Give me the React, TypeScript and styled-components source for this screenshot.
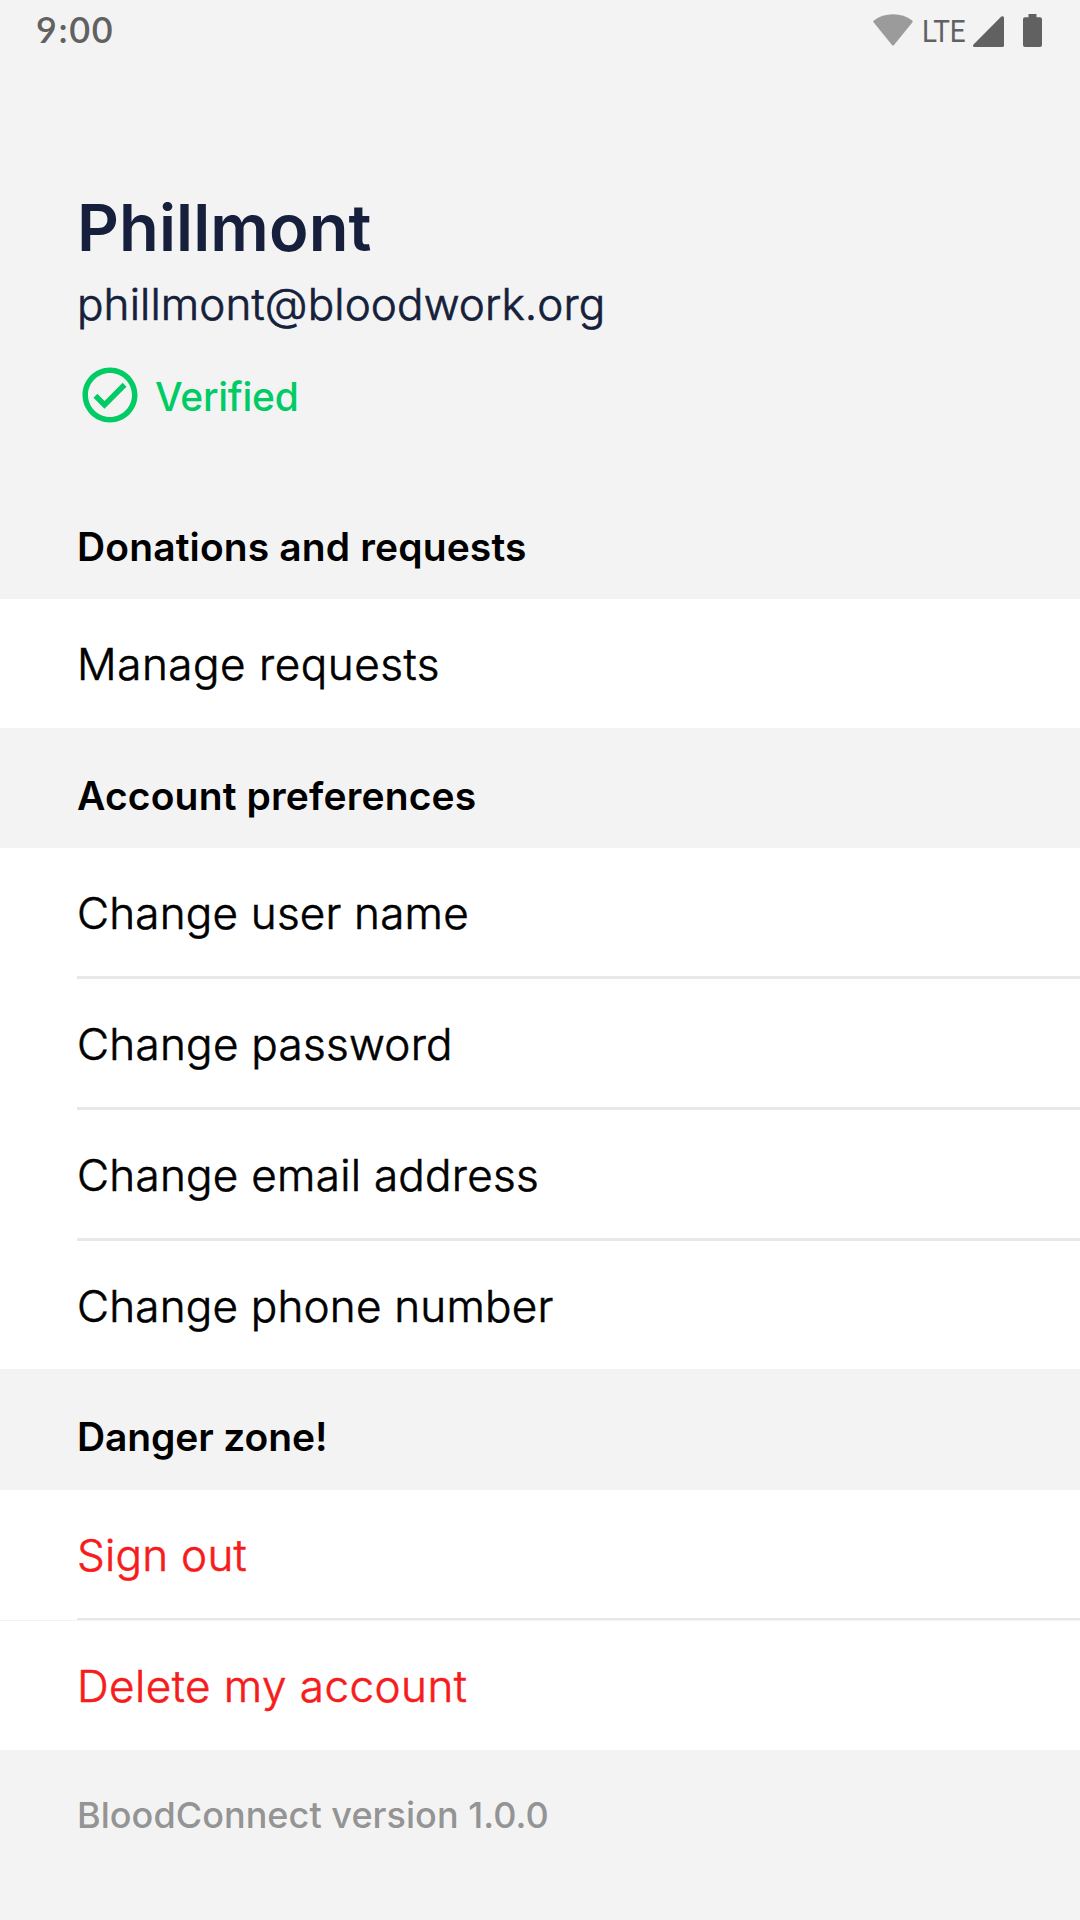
import React from "react";
import styled, { createGlobalStyle } from "styled-components";

const GlobalStyle = createGlobalStyle`
  *, *::before, *::after { box-sizing: border-box; }
  body { margin: 0; background: #f3f3f3; font-family: Inter, "Liberation Sans", sans-serif; }
`;

const Screen = styled.main`
  display: flex;
  flex-direction: column;
  width: 1080px;
  height: 1920px;
  overflow: hidden;
  background: #f3f3f3;
`;

const StatusBar = styled.header`
  display: flex;
  justify-content: space-between;
  align-items: flex-start;
  height: 62px;
  padding: 0 38px 0 36px;
  color: #616161;
`;

const Clock = styled.span`
  padding-top: 8px;
  font: 600 36px/42px Lato, sans-serif;
  letter-spacing: 1.6px;
`;

const StatusIcons = styled.div`
  display: flex;
  align-items: flex-start;
  padding-top: 14px;
`;

const Network = styled.span`
  width: 43px;
  margin: -3px 8px 0 9px;
  font: 400 32px/40px Roboto, sans-serif;
  white-space: nowrap;
  transform: scaleX(0.87);
  transform-origin: 0 50%;
`;

const Signal = styled.svg`
  margin: 2px 19px 0 0;
`;

const Profile = styled.section`
  display: flex;
  flex-direction: column;
  align-items: flex-start;
  height: 428px;
  padding: 126px 77px 0;
  color: #161f3b;
`;

const Name = styled.h1`
  margin: 0;
  font-size: 65px;
  line-height: 80px;
  font-weight: 600;
  letter-spacing: 0.12px;
`;

const Email = styled.p`
  margin: 9px 0 0;
  font-size: 44px;
  line-height: 54px;
  font-weight: 300;
  letter-spacing: 0.12px;
  -webkit-text-stroke: 0.7px currentColor;
`;

const Verified = styled.div`
  display: flex;
  align-items: center;
  gap: 12px;
  margin-top: 31px;
  color: #00cb65;
`;

const VerifiedLabel = styled.span`
  padding-top: 3px;
  font-size: 39px;
  line-height: 48px;
  font-weight: 500;
  letter-spacing: -0.25px;
`;

const SectionTitle = styled.h2<{ $height: number; $tracking: number; $bottom: number }>`
  display: flex;
  align-items: flex-end;
  height: ${({ $height }) => $height}px;
  margin: 0;
  padding: 0 77px ${({ $bottom }) => $bottom}px;
  font-size: 39px;
  line-height: 48px;
  font-weight: 600;
  letter-spacing: ${({ $tracking }) => $tracking}px;
  color: #000;
`;

const Menu = styled.ul`
  margin: 0;
  padding: 0;
  list-style: none;
  background: #fff;
`;

const MenuItem = styled.li<{ $danger: boolean; $tracking: number; $tall?: boolean }>`
  display: flex;
  align-items: center;
  height: ${({ $tall }) => ($tall ? 129 : 128)}px;
  padding: ${({ $tall }) => ($tall ? 0 : 2)}px 0 0 77px;
  font-size: 44px;
  font-weight: 300;
  letter-spacing: ${({ $tracking }) => $tracking}px;
  -webkit-text-stroke: 0.6px currentColor;
  color: ${({ $danger }) => ($danger ? "#f61c1c" : "#000")};
`;

const Divider = styled.li<{ $seam: boolean }>`
  height: 3px;
  padding-left: 77px;
  border-bottom: ${({ $seam }) => ($seam ? "1px solid #f3f3f3" : "none")};
  &::before {
    content: "";
    display: block;
    height: 100%;
    background: #e8e8e8;
  }
`;

const Version = styled.footer`
  padding: 43px 77px 0;
  font-size: 36px;
  line-height: 44px;
  font-weight: 500;
  letter-spacing: 0.05px;
  color: #949494;
`;

interface Item {
  label: string;
  tracking: number;
  tall?: boolean;
}

interface Section {
  title: string;
  height: number;
  bottom: number;
  tracking: number;
  danger: boolean;
  items: Item[];
}

const sections: Section[] = [
  {
    title: "Donations and requests",
    height: 109,
    bottom: 28,
    tracking: 0.13,
    danger: false,
    items: [{ label: "Manage requests", tracking: 0.55, tall: true }],
  },
  {
    title: "Account preferences",
    height: 120,
    bottom: 28,
    tracking: 0.16,
    danger: false,
    items: [
      { label: "Change user name", tracking: 0.2 },
      { label: "Change password", tracking: 0.28 },
      { label: "Change email address", tracking: 0.27 },
      { label: "Change phone number", tracking: 0.2 },
    ],
  },
  {
    title: "Danger zone!",
    height: 121,
    bottom: 29,
    tracking: -0.12,
    danger: true,
    items: [
      { label: "Sign out", tracking: 0.25 },
      { label: "Delete my account", tracking: 0.47, tall: true },
    ],
  },
];

export default function App() {
  return (
    <Screen>
      <GlobalStyle />
      <StatusBar>
        <Clock>9:00</Clock>
        <StatusIcons>
          <svg width="40" height="32" viewBox="0 0 40 32">
            <path d="M.8 6.6Q9 .3 20 .3T39.2 6.6Q40.1 7.5 39.3 8.6L21 31Q20 32 19 31L.7 8.6Q-.1 7.5.8 6.6Z" fill="#9b9b9b" />
          </svg>
          <Network>LTE</Network>
          <Signal width="31" height="31" viewBox="0 0 31 31">
            <path d="M28.3.6Q31-.8 31 2V29.5Q31 31 29.5 31H1.5Q-.8 31 .5 28.6Z" fill="#616161" />
          </Signal>
          <svg width="19" height="33" viewBox="0 0 19 33">
            <path d="M5.5 3.3V0H13.5V3.3H17Q19 3.3 19 5.3V31Q19 33 17 33H2Q0 33 0 31V5.3Q0 3.3 2 3.3Z" fill="#616161" />
          </svg>
        </StatusIcons>
      </StatusBar>
      <Profile>
        <Name>Phillmont</Name>
        <Email>phillmont@bloodwork.org</Email>
        <Verified>
          <svg width="66" height="66" viewBox="0 0 24 24" fill="currentColor">
            <path d="M12 2C6.48 2 2 6.48 2 12s4.48 10 10 10 10-4.48 10-10S17.52 2 12 2zm0 18c-4.41 0-8-3.59-8-8s3.59-8 8-8 8 3.59 8 8-3.59 8-8 8zm4.59-12.42L10 14.17l-2.59-2.58L6 13l4 4 8-8z" />
          </svg>
          <VerifiedLabel>Verified</VerifiedLabel>
        </Verified>
      </Profile>
      {sections.map((section) => (
        <React.Fragment key={section.title}>
          <SectionTitle $height={section.height} $tracking={section.tracking} $bottom={section.bottom}>
            {section.title}
          </SectionTitle>
          <Menu>
            {section.items.map((item, index) => (
              <React.Fragment key={item.label}>
                {index > 0 && <Divider $seam={section.danger} />}
                <MenuItem $danger={section.danger} $tracking={item.tracking} $tall={item.tall}>
                  {item.label}
                </MenuItem>
              </React.Fragment>
            ))}
          </Menu>
        </React.Fragment>
      ))}
      <Version>BloodConnect version 1.0.0</Version>
    </Screen>
  );
}
